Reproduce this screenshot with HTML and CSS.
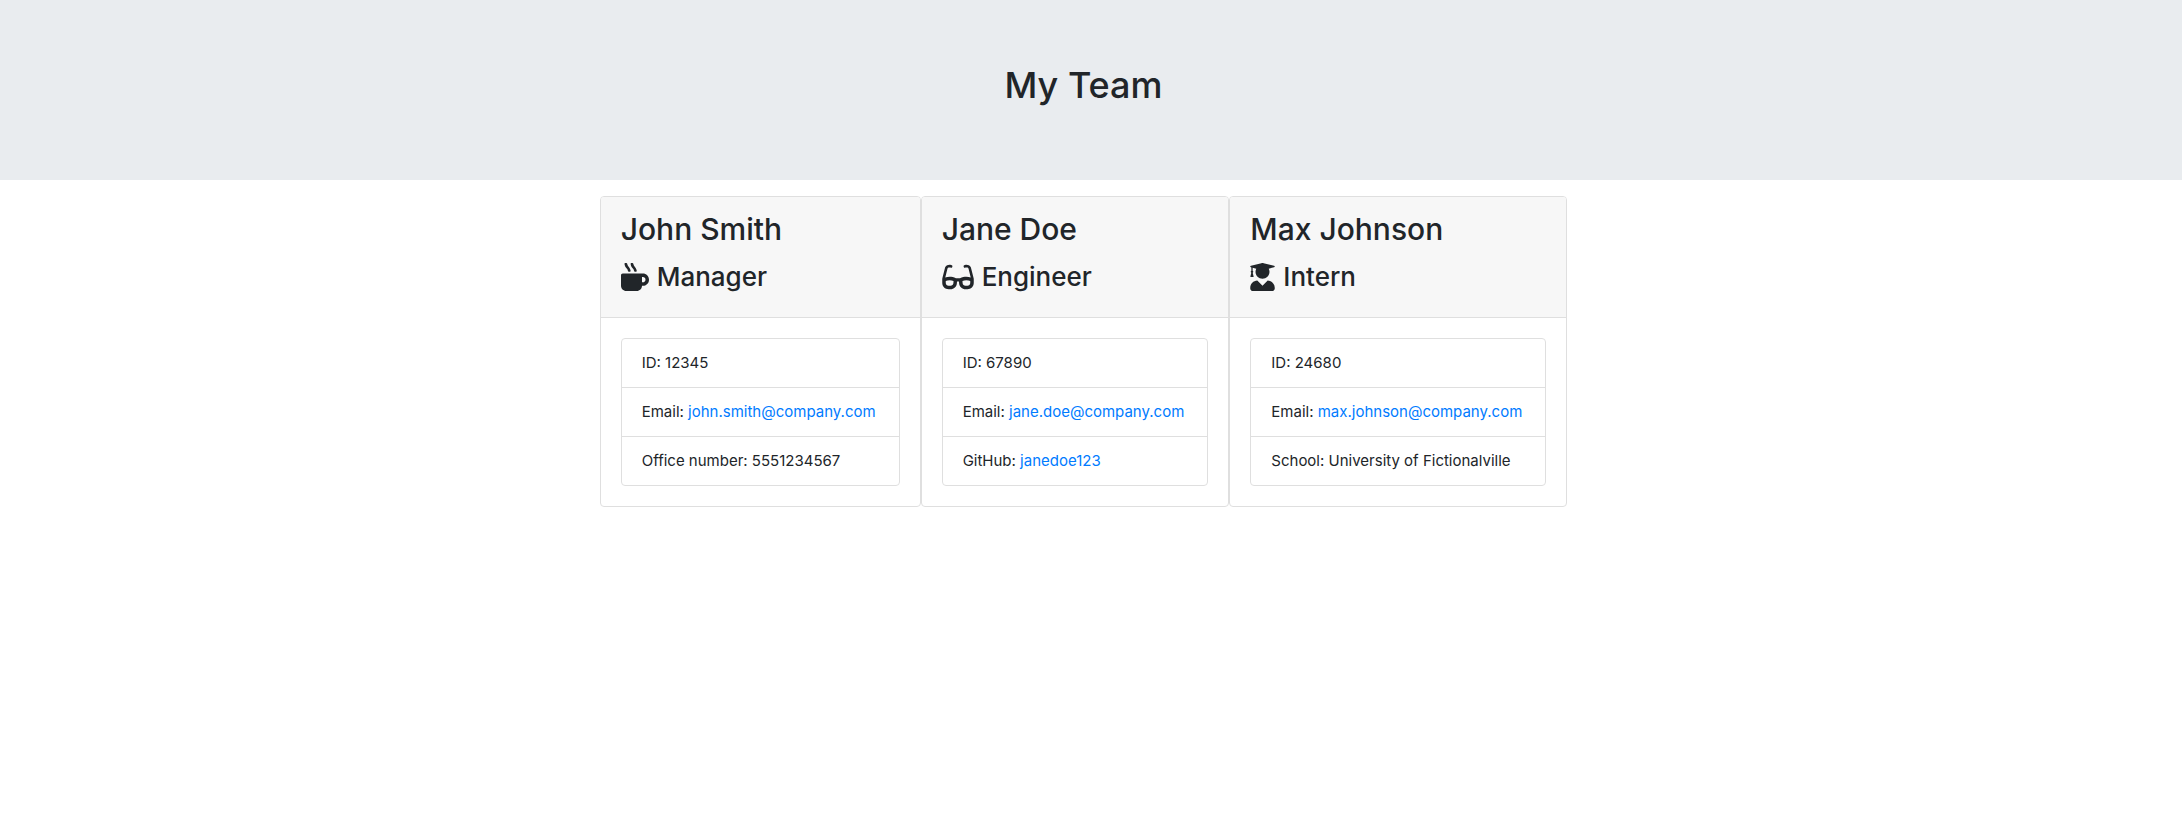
FILE: index.html
```html
<!DOCTYPE html>
<html lang="en">
<head>
<meta charset="utf-8">
<meta name="viewport" content="width=device-width, initial-scale=1">
<title>My Team</title>
<link rel="stylesheet" href="styles.css">
</head>
<body>
<header class="banner">
  <h1 class="banner-title">My Team</h1>
</header>
<main class="team">
  <article class="card">
    <div class="card-header">
      <h2 class="name">John Smith</h2>
      <h3 class="role"><svg class="icon" viewBox="0 0 512 512" width="28" height="28" aria-hidden="true"><path d="M127.1 146.5c1.3 7.7 8 13.5 16 13.5h16.5c9.8 0 17.6-8.5 16.3-18-3.8-28.2-16.4-54.2-36.6-74.7-14.4-14.7-23.6-33.3-26.4-53.5C111.8 5.9 105 0 96.8 0H80.4C70.6 0 63 8.5 64.1 18c3.9 31.9 18 61.3 40.6 84.4 12 12.2 19.7 27.5 22.4 44.1zm112 0c1.3 7.7 8 13.5 16 13.5h16.5c9.8 0 17.6-8.5 16.3-18-3.8-28.2-16.4-54.2-36.6-74.7-14.4-14.7-23.6-33.3-26.4-53.5C223.8 5.9 217 0 208.8 0h-16.4c-9.8 0-17.4 8.5-16.3 18 3.9 31.9 18 61.3 40.6 84.4 12 12.2 19.7 27.5 22.4 44.1zM400 192H32c-17.7 0-32 14.3-32 32v192c0 53 43 96 96 96h192c53 0 96-43 96-96h16c61.8 0 112-50.2 112-112s-50.2-112-112-112zm0 160h-16v-96h16c26.5 0 48 21.5 48 48s-21.5 48-48 48z"/></svg>Manager</h3>
    </div>
    <div class="card-body">
      <ul class="details">
        <li>ID: 12345</li>
        <li>Email: <a href="mailto:john.smith@company.com">john.smith@company.com</a></li>
        <li>Office number: 5551234567</li>
      </ul>
    </div>
  </article>
  <article class="card">
    <div class="card-header">
      <h2 class="name">Jane Doe</h2>
      <h3 class="role"><svg class="icon" viewBox="0 0 576 512" width="32" height="28" aria-hidden="true"><path d="M574.1 280.37L528.75 98.66c-5.91-23.7-21.59-44.05-43-55.81-21.44-11.73-46.97-14.11-70.19-6.33l-15.25 5.08c-8.39 2.79-12.92 11.86-10.12 20.24l5.06 15.18c2.79 8.38 11.85 12.91 20.23 10.12l13.18-4.39c10.87-3.62 23-3.57 33.16 1.73 10.29 5.37 17.57 14.56 20.37 25.82l38.46 153.82c-22.19-6.81-49.79-12.46-81.2-12.46-34.77 0-73.98 7.02-114.85 26.74h-73.18c-40.87-19.74-80.08-26.75-114.86-26.75-31.42 0-59.02 5.65-81.21 12.46l38.46-153.83c2.79-11.25 10.09-20.45 20.38-25.81 10.16-5.3 22.28-5.35 33.15-1.73l13.17 4.39c8.38 2.79 17.44-1.74 20.23-10.12l5.06-15.18c2.8-8.38-1.73-17.45-10.12-20.24l-15.25-5.08c-23.22-7.78-48.75-5.41-70.19 6.33-21.41 11.77-37.09 32.11-43 55.8L1.9 280.37A64.218 64.218 0 0 0 0 295.86v70.25C0 429.01 51.58 480 115.2 480h37.12c60.28 0 110.37-45.94 114.88-105.37l2.93-38.63h35.75l2.93 38.63C313.31 434.06 363.4 480 423.68 480h37.12c63.62 0 115.2-50.99 115.2-113.88v-70.25c0-5.23-.64-10.43-1.9-15.5zm-370.72 89.42c-1.97 25.91-24.4 46.21-51.06 46.21H115.2C86.97 416 64 393.62 64 366.11v-37.54c18.12-6.49 43.42-12.92 72.58-12.92 23.86 0 47.26 4.33 69.93 12.92l-3.13 41.22zM512 366.12c0 27.51-22.97 49.88-51.2 49.88h-37.12c-26.67 0-49.1-20.3-51.06-46.21l-3.13-41.22c22.67-8.59 46.08-12.92 69.95-12.92 29.12 0 54.43 6.44 72.55 12.93v37.54z"/></svg>Engineer</h3>
    </div>
    <div class="card-body">
      <ul class="details">
        <li>ID: 67890</li>
        <li>Email: <a href="mailto:jane.doe@company.com">jane.doe@company.com</a></li>
        <li>GitHub: <a href="https://github.com/janedoe123">janedoe123</a></li>
      </ul>
    </div>
  </article>
  <article class="card">
    <div class="card-header">
      <h2 class="name">Max Johnson</h2>
      <h3 class="role"><svg class="icon" viewBox="0 0 448 512" width="25" height="28" aria-hidden="true"><path d="M319.4 320.6L224 416l-95.4-95.4C57.1 323.7 0 382.2 0 454.4v9.6c0 26.5 21.5 48 48 48h352c26.5 0 48-21.5 48-48v-9.6c0-72.2-57.1-130.7-128.6-133.8zM13.6 79.8l6.4 1.5v58.4c-7 4.2-12 11.5-12 20.3 0 8.4 4.6 15.4 11.1 19.7L3.5 242c-1.7 6.9 2.1 14 7.6 14h41.8c5.5 0 9.3-7.1 7.6-14l-15.6-62.3C51.4 175.4 56 168.4 56 160c0-8.8-5-16.1-12-20.3V87.1l66 15.9c-8.6 17.2-14 36.4-14 57 0 70.7 57.3 128 128 128s128-57.3 128-128c0-20.6-5.3-39.8-14-57l96.3-23.2c18.2-4.4 18.2-27.1 0-31.5l-190.4-46c-13-3.1-26.7-3.1-39.7 0L13.6 48.2c-18.1 4.4-18.1 27.2 0 31.6z"/></svg>Intern</h3>
    </div>
    <div class="card-body">
      <ul class="details">
        <li>ID: 24680</li>
        <li>Email: <a href="mailto:max.johnson@company.com">max.johnson@company.com</a></li>
        <li>School: University of Fictionalville</li>
      </ul>
    </div>
  </article>
</main>
</body>
</html>
```
FILE: styles.css
```css
*,
*::before,
*::after {
  box-sizing: border-box;
}

body {
  margin: 0;
  padding-right: 15px;
  background: #fff;
  color: #212529;
  font-family: Inter, "Liberation Sans", sans-serif;
  font-size: 15px;
  line-height: 24px;
}

h1,
h2,
h3 {
  margin: 0 0 8px;
  font-weight: 500;
}

.banner {
  margin-right: -15px;
  padding: 61px 31px 63px 16px;
  background: #e9ecef;
  text-align: center;
}

.banner-title {
  font-size: 36px;
  line-height: 48px;
}

.team {
  display: flex;
  flex-wrap: wrap;
  justify-content: center;
  margin-top: 16px;
}

.card {
  border: 1px solid #dfdfdf;
  border-radius: 4px;
  background: #fff;
  overflow: hidden;
}

.card-header {
  padding: 13px 20px 11px;
  border-bottom: 1px solid #dfdfdf;
  background: #f7f7f7;
}

.name {
  font-size: 30px;
  line-height: 38px;
}

.role {
  display: flex;
  align-items: center;
  gap: 8px;
  font-size: 26px;
  line-height: 42px;
}

.icon {
  flex: none;
  fill: currentColor;
}

.card-body {
  padding: 20px;
}

.details {
  margin: 0;
  padding: 0;
  border: 1px solid #dfdfdf;
  border-radius: 4px;
  list-style: none;
}

.details li {
  padding: 12px 23px 12px 20px;
}

.details li + li {
  border-top: 1px solid #dfdfdf;
}

.details a {
  color: #007bff;
  text-decoration: none;
}

.details a:hover {
  color: #0056b3;
  text-decoration: underline;
}
```
